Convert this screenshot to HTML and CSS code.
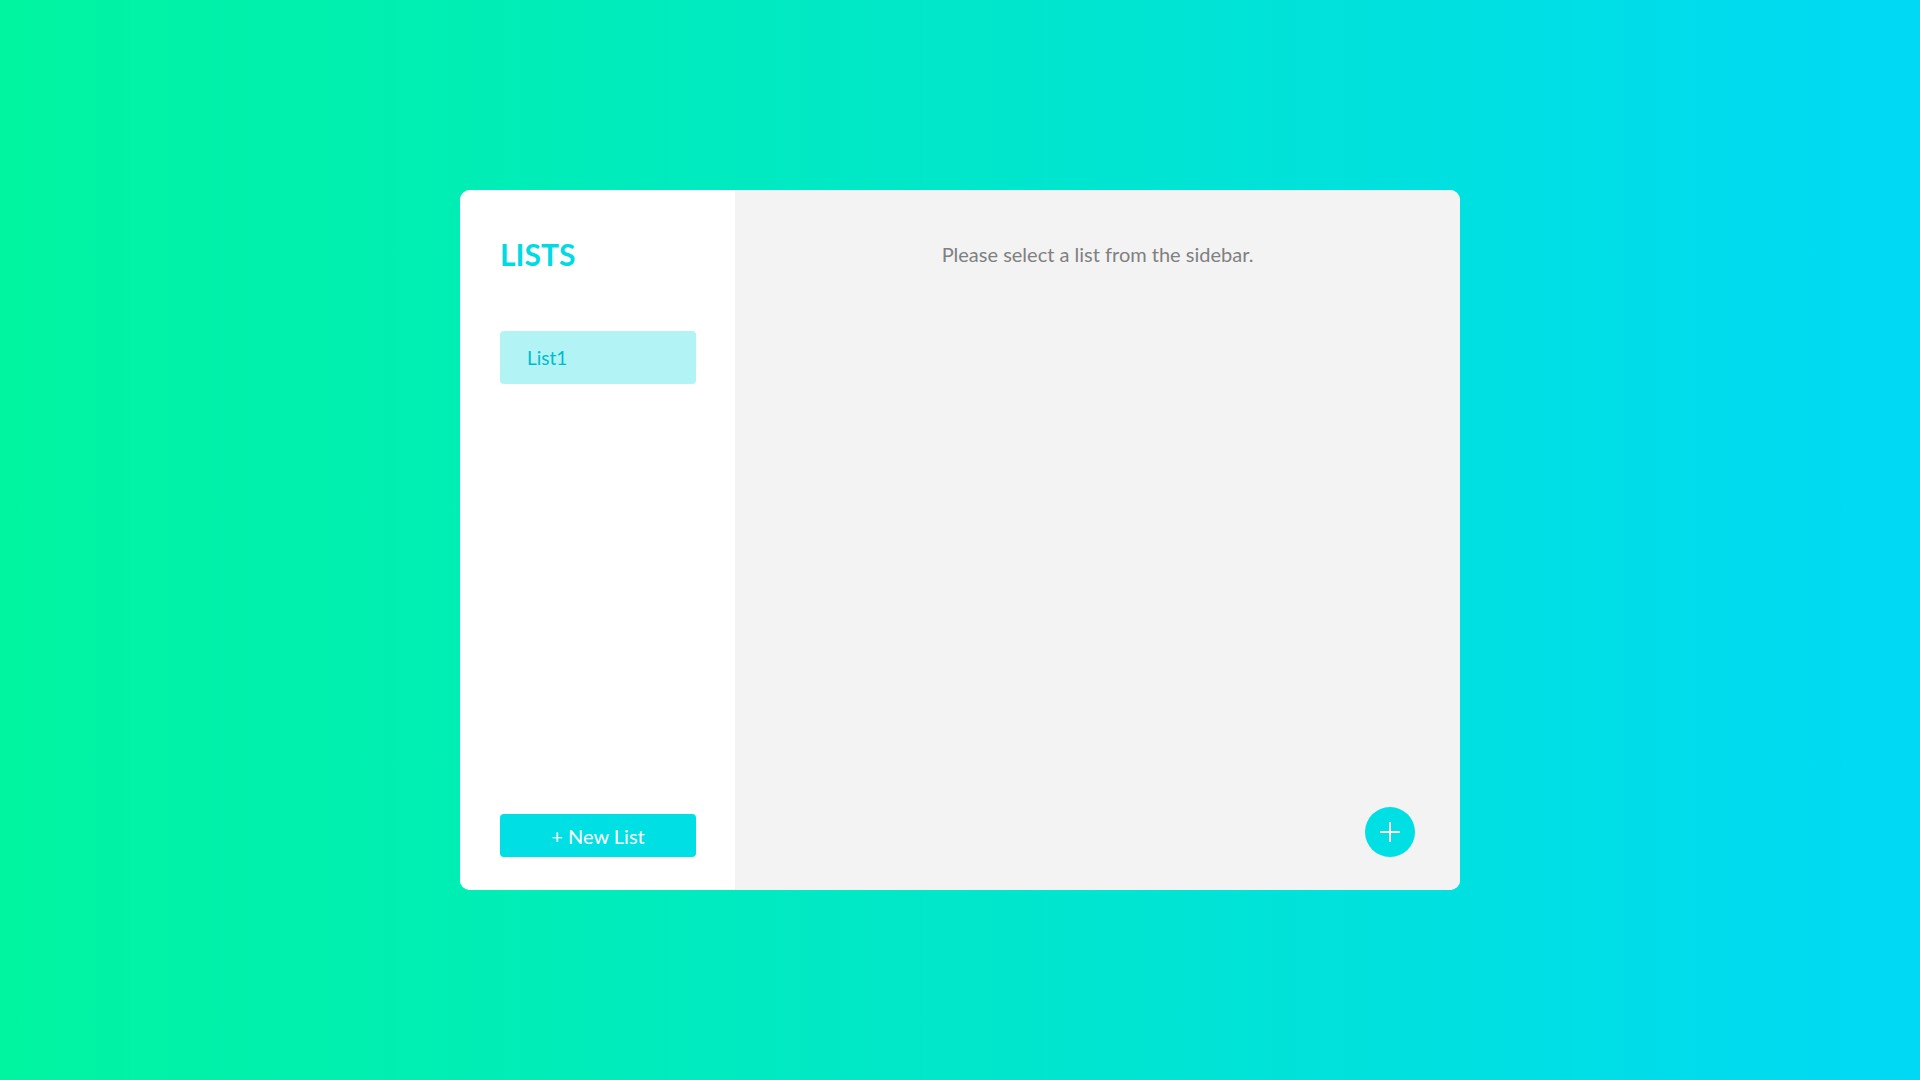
FILE: index.html
```html
<!DOCTYPE html>
<html>
<head>
<meta charset="utf-8">
<link rel="stylesheet" href="styles.css">
</head>
<body>
<div class="app">
  <div class="card">
    <aside class="sidebar">
      <h1 class="title">LISTS</h1>
      <ul class="lists">
        <li class="list-item active">List1</li>
      </ul>
      <button class="new-list">+ New List</button>
    </aside>
    <main class="content">
      <p class="empty">Please select a list from the sidebar.</p>
      <button class="fab" aria-label="Add">
        <svg width="20" height="20" viewBox="0 0 20 20"><path d="M10 0V20M0 10H20" stroke="#fff" stroke-width="2"/></svg>
      </button>
    </main>
  </div>
</div>
</body>
</html>
```
FILE: styles.css
```css
* { box-sizing: border-box; }
html, body { margin: 0; padding: 0; height: 100%; }
body {
  font-family: "Lato", "Open Sans", sans-serif;
  background: linear-gradient(90deg, #00f5a0 0%, #00d9f5 100%);
}
.app {
  height: 100vh;
  display: flex;
  align-items: center;
  justify-content: center;
}
.card {
  width: 1000px;
  height: 700px;
  border-radius: 10px;
  overflow: hidden;
  display: flex;
  background: #fff;
}
.sidebar {
  width: 275px;
  flex: none;
  background: #fff;
  padding: 44px 39px 33px 40px;
  display: flex;
  flex-direction: column;
}
.title {
  margin: 0;
  font-size: 30px;
  line-height: 40px;
  font-weight: 700;
  color: #00dbe3;
}
.lists {
  list-style: none;
  margin: 57px 0 0 0;
  padding: 0;
  flex: 1;
}
.list-item {
  height: 53px;
  line-height: 53px;
  padding-left: 27px;
  border-radius: 4px;
  font-size: 19px;
  color: #00bccb;
  background: #b2f4f5;
}
.new-list {
  height: 43px;
  border: none;
  border-radius: 4px;
  background: #00dfe3;
  color: #fff;
  font-family: inherit;
  font-size: 20px;
  padding: 0;
}
.content {
  flex: 1;
  background: #f3f3f3;
  padding: 49px 45px 33px 45px;
  display: flex;
  flex-direction: column;
  align-items: center;
}
.empty {
  margin: 0;
  font-size: 20px;
  line-height: 30px;
  color: #808080;
  flex: 1;
}
.fab {
  align-self: flex-end;
  width: 50px;
  height: 50px;
  border-radius: 50%;
  border: none;
  padding: 0;
  background: #00dfe3;
  display: flex;
  align-items: center;
  justify-content: center;
}
```
